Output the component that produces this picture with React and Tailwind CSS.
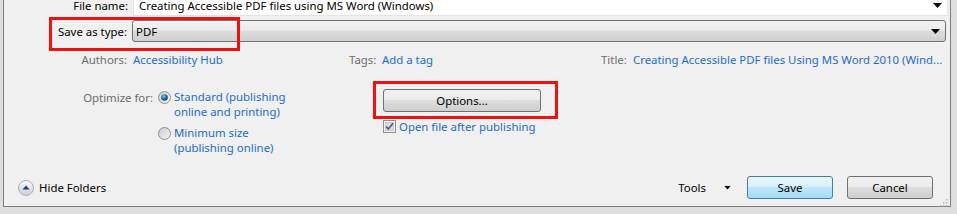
const font = { fontFamily: '"Noto Sans", "Open Sans", sans-serif' }

function Arrow({ className = '' }) {
  return (
    <svg width="9" height="5" viewBox="0 0 9 5" className={className}>
      <path d="M0 0 H9 L4.5 5 Z" fill="#000" />
    </svg>
  )
}

function Radio({ checked }) {
  return (
    <svg width="13" height="13" viewBox="0 0 13 13" className="shrink-0">
      <defs>
        <linearGradient id={checked ? 'rg1' : 'rg2'} x1="0" y1="0" x2="1" y2="1">
          <stop offset="0" stopColor="#c9c9c9" />
          <stop offset="1" stopColor="#f7f7f7" />
        </linearGradient>
        <radialGradient id="dot" cx="0.4" cy="0.35" r="0.7">
          <stop offset="0" stopColor="#8fd0f4" />
          <stop offset="0.5" stopColor="#1a6fa8" />
          <stop offset="1" stopColor="#0b3c63" />
        </radialGradient>
      </defs>
      <circle cx="6.5" cy="6.5" r="6" fill={`url(#${checked ? 'rg1' : 'rg2'})`} stroke="#8e8f8f" />
      {checked && <circle cx="6.5" cy="6.5" r="3.3" fill="url(#dot)" />}
    </svg>
  )
}

function Checkbox() {
  return (
    <svg width="13" height="13" viewBox="0 0 13 13" className="shrink-0">
      <rect x="0.5" y="0.5" width="12" height="12" fill="#f4f4f4" stroke="#8e8f8f" />
      <rect x="2.5" y="2.5" width="8" height="8" fill="#dcdcdc" stroke="#c8c8c8" />
      <path d="M3 6.5 L5.3 9 L10 3.3" fill="none" stroke="#4a5f97" strokeWidth="1.8" />
    </svg>
  )
}

function Button({ children, primary, className = '' }) {
  return (
    <div
      className={`flex items-center justify-center rounded-[3px] border text-black ${
        primary
          ? 'border-[#3c7fb1] bg-[linear-gradient(#eaf6fd_0%,#d9f0fc_45%,#bee6fd_50%,#a7d9f5_100%)]'
          : 'border-[#707070] bg-[linear-gradient(#f2f2f2_0%,#ebebeb_45%,#dddddd_50%,#cfcfcf_100%)]'
      } ${className}`}
    >
      {children}
    </div>
  )
}

export default function App() {
  return (
    <div style={font} className="relative h-[214px] w-[957px] overflow-hidden whitespace-nowrap bg-[#dfdfdf] text-[11.4px] leading-[15px]">
      <div className="ml-[3px] h-[207px] w-[948px] border-b border-l border-r border-[#7d7d7d] bg-[#f0f0f0]">
        {/* file name */}
        <div className="flex h-[16px] items-start leading-[12px]">
          <div className="w-[124px] text-right text-black">File name:</div>
          <div className="ml-[5px] flex h-[16px] w-[815px] items-start justify-between border border-t-0 border-[#e3e3e3] bg-white pl-[5px] pr-[5px]">
            <span>Creating Accessible PDF files using MS Word (Windows)</span>
            <Arrow className="mt-[3px]" />
          </div>
        </div>

        {/* save as type */}
        <div className="mt-[4px] flex h-[22px] items-center">
          <div className="w-[123px] text-right text-black">Save as type:</div>
          <div className="ml-[5px] flex h-[22px] w-[814px] items-center justify-between rounded-[3px] border border-[#707070] bg-[linear-gradient(#f2f2f2_0%,#ebebeb_45%,#dddddd_50%,#cfcfcf_100%)] pl-[3px] pr-[5px]">
            <span>PDF</span>
            <Arrow />
          </div>
        </div>

        {/* authors */}
        <div className="mt-[10px] flex h-[15px] items-center">
          <div className="w-[123px] text-right text-[#6d6d6d]">Authors:</div>
          <div className="ml-[6px] w-[216px] text-[#1e6ccc]">Accessibility Hub</div>
          <div className="w-[33px] text-[#6d6d6d]">Tags:</div>
          <div className="w-[219px] text-[#1e6ccc]">Add a tag</div>
          <div className="w-[32px] text-[#6d6d6d]">Title:</div>
          <div className="text-[#1e6ccc]">Creating Accessible PDF files Using MS Word 2010 (Wind...</div>
        </div>

        {/* optimize */}
        <div className="mt-[22px] flex">
          <div className="w-[149px] pt-[1px] text-right text-[#6d6d6d]">Optimize for:</div>
          <div className="ml-[5px] flex w-[220px] flex-col">
            <div className="flex items-start">
              <div className="mt-[2px]"><Radio checked /></div>
              <div className="ml-[3px] text-[#1e6ccc]">Standard (publishing<br />online and printing)</div>
            </div>
            <div className="mt-[6px] flex items-start">
              <div className="mt-[2px]"><Radio /></div>
              <div className="ml-[3px] text-[#1e6ccc]">Minimum size<br />(publishing online)</div>
            </div>
          </div>
          <div className="ml-[5px] flex flex-col">
            <Button className="h-[23px] w-[158px]">Options...</Button>
            <div className="mt-[7px] flex items-center">
              <Checkbox />
              <span className="ml-[3px] text-[#1e6ccc]">Open file after publishing</span>
            </div>
          </div>
        </div>

        {/* bottom */}
        <div className="mt-[21px] flex h-[23px] items-center">
          <div className="ml-[14px] flex items-center">
            <svg width="16" height="16" viewBox="0 0 16 16">
              <defs>
                <linearGradient id="hf" x1="0" y1="0" x2="0" y2="1">
                  <stop offset="0" stopColor="#fbfbfb" />
                  <stop offset="1" stopColor="#c9ced6" />
                </linearGradient>
              </defs>
              <circle cx="8" cy="8" r="7.5" fill="url(#hf)" stroke="#a9b0bb" />
              <path d="M4.5 9.5 L8 5.5 L11.5 9.5 Z" fill="#1f3f7a" />
            </svg>
            <span className="ml-[5px] text-black">Hide Folders</span>
          </div>
          <div className="ml-auto flex items-center">
            <span className="text-black">Tools</span>
            <Arrow className="ml-[17px] scale-75" />
            <Button primary className="ml-[15px] h-[23px] w-[86px]">Save</Button>
            <Button className="ml-[14px] h-[23px] w-[86px]">Cancel</Button>
            <div className="w-[17px]" />
          </div>
        </div>
      </div>

      {/* resize grip */}
      <svg width="8" height="8" viewBox="0 0 8 8" className="absolute left-[940px] top-[199px]">
        {[[6, 0], [3, 3], [6, 3], [0, 6], [3, 6], [6, 6]].map(([x, y], i) => (
          <rect key={i} x={x} y={y} width="1.5" height="1.5" fill="#b8b8b8" />
        ))}
      </svg>

      {/* annotation boxes */}
      <div className="absolute left-[49px] top-[17px] h-[34px] w-[191px] border-[3px] border-[#ee1111]" />
      <div className="absolute left-[373px] top-[81px] h-[38px] w-[185px] border-[3px] border-[#ee1111]" />
    </div>
  )
}
